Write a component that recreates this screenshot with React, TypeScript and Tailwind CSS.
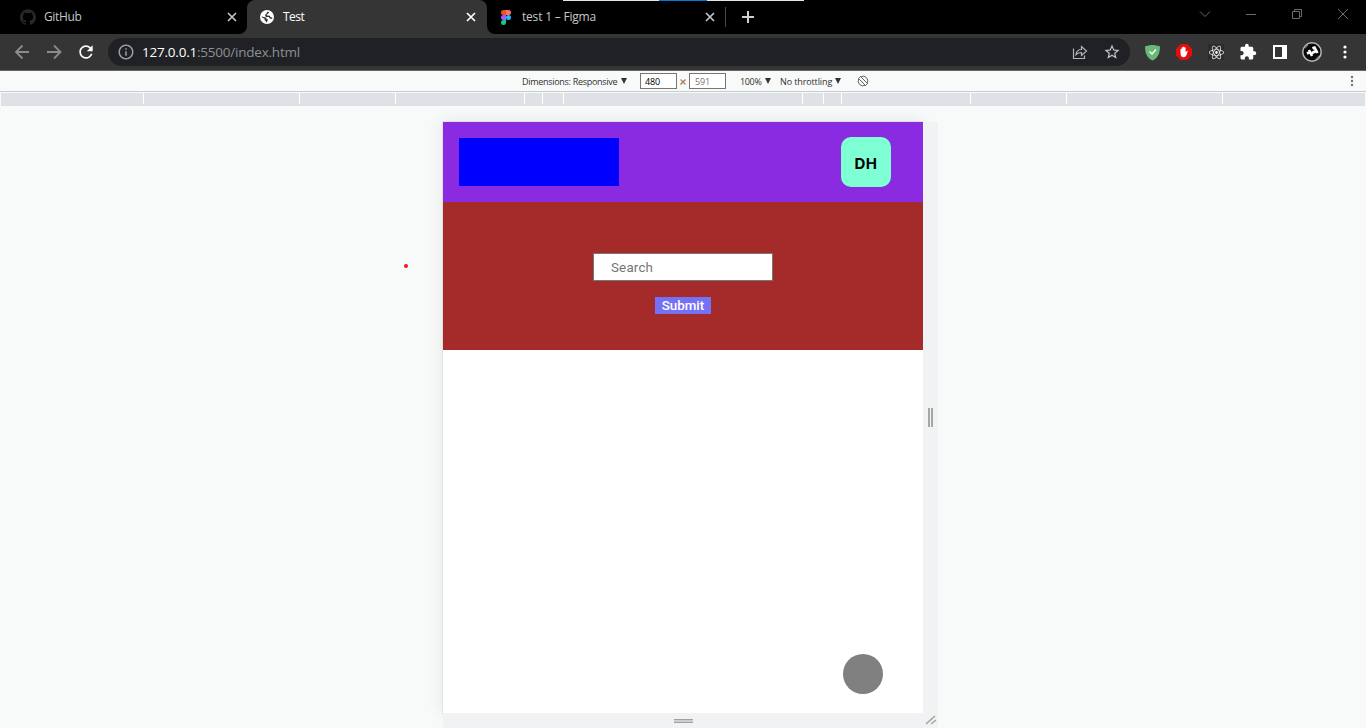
import React from 'react';
import { SiGithub, SiReact } from 'react-icons/si';
import { MdExtension, MdStarBorder, MdRefresh, MdInfoOutline } from 'react-icons/md';

function Close({ className = '' }: { className?: string }) {
  return (
    <svg className={className} width="10" height="10" viewBox="0 0 10 10" stroke="currentColor" strokeWidth="1.7">
      <path d="M1 1l8 8M9 1L1 9" />
    </svg>
  );
}

function FigmaLogo() {
  return (
    <svg width="10" height="15" viewBox="0 0 10 15">
      <path fill="#f24e1e" d="M5 0H2.5a2.5 2.5 0 0 0 0 5H5z" />
      <path fill="#ff7262" d="M5 0h2.5a2.5 2.5 0 0 1 0 5H5z" />
      <path fill="#a259ff" d="M5 5H2.5a2.5 2.5 0 0 0 0 5H5z" />
      <circle cx="7.5" cy="7.5" r="2.5" fill="#1abcfe" />
      <path fill="#0acf83" d="M5 10H2.5A2.5 2.5 0 1 0 5 12.5z" />
    </svg>
  );
}

function Globe() {
  return (
    <svg width="14" height="14" viewBox="0 0 14 14">
      <circle cx="7" cy="7" r="7" fill="#fff" />
      <path
        d="M1.600 6.200Q3.500 7 5.200 7.200 6.800 7.500 6.600 9L8 9.400 6.800 12.500Q5.800 12.500 5.800 11L4.600 10.300V8.800L2 7.500zM7 1.800l2 .2-.6 1.600-1.700.8.5 1.200 2.600.2.8 1.400 1.700.2-.2 1.500-2.300-.3-1-1.500-3-.2-.8-2.200 1.500-1z"
        fill="#353535"
      />
    </svg>
  );
}

function TabBar() {
  return (
    <div className="relative flex h-[34px] bg-black text-[12px] text-[#c4c7ca]">
      <div className="flex h-[34px] w-[247px] items-center pl-5">
        <SiGithub className="size-4 text-[#24292f]" />
        <span className="ml-2 w-[184px] tracking-[-0.35px]">GitHub</span>
        <Close className="-ml-px text-[#c4c7ca]" />
      </div>
      <div className="relative flex h-[34px] w-[240px] items-center rounded-t-lg bg-[#353535] pl-[13px] text-white">
        <svg className="absolute bottom-0 -left-2" width="8" height="8"><path d="M8 0v8H0a8 8 0 0 0 8-8" fill="#353535" /></svg>
        <svg className="absolute -right-2 bottom-0" width="8" height="8"><path d="M0 0v8h8a8 8 0 0 1-8-8" fill="#353535" /></svg>
        <Globe />
        <span className="ml-[9px] w-[183px] tracking-[-0.55px]">Test</span>
        <Close />
      </div>
      <div className="flex h-[34px] w-[238px] items-center pl-[14px]">
        <FigmaLogo />
        <span className="ml-[11px] w-[183px] tracking-[-0.2px]">test 1 – Figma</span>
        <Close />
      </div>
      <div className="mt-[7px] h-5 w-px bg-[#4a4a4a]" />
      <svg className="mt-[11px] ml-4" width="12" height="12" stroke="#d0d0d0" strokeWidth="2"><path d="M6 0v12M0 6h12" /></svg>
      <div className="absolute top-0 left-[563px] flex h-px w-[241px] bg-[#e4e4e4]">
        <div className="ml-24 h-px w-12 bg-[#0078d7]" />
      </div>
      <svg className="ml-auto" width="176" height="34" fill="none" stroke="#6c6c6c">
        <path d="M10 11.5l5 5 5-5M56 14.5h10" />
        <path d="M102.500 11.500h7v7h-7zM104.500 11.500v-2h7v7h-2" />
        <path d="M148 9l10 10M158 9l-10 10" />
      </svg>
    </div>
  );
}

function AddressBar() {
  return (
    <div className="flex h-9 items-center bg-[#353535]">
      <svg width="108" height="36" fill="none" stroke="#8b8b8b" strokeWidth="1.8">
        <path d="M29 18H16M22.500 11.500L16 18l6.500 6.500M47 18h13M54 11.500l6.500 6.500-6.500 6.500" />
      </svg>
      <MdRefresh className="-ml-[32px] size-5 text-white" />
      <div className="ml-3 flex h-7 w-[1022px] shrink-0 items-center rounded-full bg-[#202124] pl-[9px]">
        <MdInfoOutline className="size-[18px] text-[#9a9da1]" />
        <div className="ml-[7px] text-[13.5px] tracking-[-0.22px] text-[#8d9094]">
          <span className="text-white">127.0.0.1</span>:5500/index.html
        </div>
        <svg className="ml-auto" width="16" height="16" fill="none" stroke="#b2b4b7" strokeWidth="1.2">
          <path d="M1.500 4.500v10h11v-3" />
          <path d="M4 10.500C4.500 7 6.500 5.500 9.500 5.500v-3l5 4.500-5 4.500v-3C7 8.500 5.500 9 4 10.500z" />
        </svg>
        <MdStarBorder className="mr-[9px] ml-[15px] size-[18px] text-[#c1c3c6]" />
      </div>
      <svg className="ml-[14px] shrink-0" width="17" height="17" viewBox="0 0 17 17">
        <path d="M1 2.500C4 1.500 6 1 8.500 1s4.500.5 7.500 1.500C16 9 14 14 8.500 16.500 3 14 1 9 1 2.500z" fill="#68b878" />
        <path d="M5.500 7.500L8 10l4-4.500" fill="none" stroke="#fff" strokeWidth="1.4" />
      </svg>
      <svg className="ml-[15px] shrink-0" width="16" height="16" viewBox="0 0 16 16">
        <path d="M4.700 0h6.600L16 4.700v6.600L11.300 16H4.700L0 11.300V4.700z" fill="#e40d0d" />
        <path d="M4.500 9V5.200q.6-.8 1.200 0V8V3.500q.7-.9 1.300 0V7V2.900q.7-.9 1.300 0V7V3.600q.7-.9 1.300 0v5l1.200-1.700q.8-.4 1 .2L10.300 11.500q-.9 1.700-2.500 1.700Q4.500 13.200 4.500 9z" fill="#fff" />
      </svg>
      <div className="ml-4 flex size-4 items-center justify-center bg-[#2c2c2c]"><SiReact className="size-[15px] text-[#f4f4f4]" /></div>
      <MdExtension className="ml-[15px] size-[18px] text-white" />
      <svg className="ml-4 shrink-0" width="14" height="14"><path d="M0 0h14v14H0zM2 2v10h7V2z" fill="#fff" fillRule="evenodd" /></svg>
      <svg className="ml-[15px] shrink-0" width="20" height="20" viewBox="0 0 20 20">
        <circle cx="10" cy="10" r="9.200" fill="#080808" stroke="#b8b8b8" strokeWidth="1.500" />
        <path d="M3 6.500L6 3M13.500 17l4-3.500" stroke="#888" strokeWidth="1" />
        <path d="M5 11.500L9 9.500M7 8l3 6M10 11l4-2M12 4.500l3.500 6.500M12.500 5.500L10.500 6.500" stroke="#fff" strokeWidth="2.600" />
      </svg>
      <svg className="ml-[20.500px] shrink-0" width="4" height="14" fill="#fff"><circle cx="2" cy="2" r="1.600" /><circle cx="2" cy="7" r="1.600" /><circle cx="2" cy="12" r="1.600" /></svg>
    </div>
  );
}

function Arrow({ className = '' }: { className?: string }) {
  return <svg className={className} width="6" height="6"><path d="M0 0h6L3 6z" fill="#333" /></svg>;
}

function DeviceBar() {
  return (
    <div className="flex h-[22px] items-center border-t border-b border-t-[#646464] border-b-[#c8cbcd] bg-[#f8faf9] pl-[522px] text-[9px] whitespace-nowrap text-[#303030]">
      <span className="w-[99px] pt-px tracking-[-0.29px]">Dimensions: Responsive</span>
      <Arrow />
      <div className="ml-[13px] flex h-4 w-[37px] items-center border border-[#767676] bg-white pt-px pl-1 tracking-[-0.2px] text-black">480</div>
      <svg className="mx-[3px] mt-[2px]" width="6" height="6" strokeWidth="1.400"><path d="M.5.5l5 5" stroke="#7d9fb5" /><path d="M5.500.5l-5 5" stroke="#d0701c" /></svg>
      <div className="flex h-4 w-[37px] items-center border border-[#767676] bg-white pt-px pl-[5px] tracking-[-0.2px] text-[#757575]">591</div>
      <span className="ml-[14px] w-[25px] pt-px tracking-[-0.35px]">100%</span>
      <Arrow />
      <span className="ml-[9px] w-[56px] pt-px tracking-[-0.12px]">No throttling</span>
      <Arrow className="-ml-px" />
      <svg className="ml-[16px]" width="12" height="12" viewBox="0 0 12 12" fill="none" stroke="#666">
        <path d="M4 1.700a4.700 4.700 0 0 1 6.300 6.300M8 10.300A4.700 4.700 0 0 1 1.700 4M1.500 3.500l7.500 7.500M3.500 1.500l7.500 7.500M3.700 1.300L1.300 3.700M10.700 8.300L8.300 10.700" />
      </svg>
      <svg className="mr-3 ml-auto" width="4" height="12" fill="#6e7073"><circle cx="2" cy="2" r="1.200" /><circle cx="2" cy="6" r="1.200" /><circle cx="2" cy="10" r="1.200" /></svg>
    </div>
  );
}

const TICKS = [0, 143, 299, 395, 524, 542, 563, 802, 823, 841, 970, 1066, 1222, 1365];

function Ruler() {
  return (
    <div className="mt-px flex h-[13px] bg-[#dee1e6]">
      {TICKS.map((x, i) => (
        <div
          key={x}
          className={i === 0 || i === 13 ? 'h-[13px] border-l border-[#f8faf9]' : 'h-[11px] border-l border-white'}
          style={{ width: (TICKS[i + 1] ?? 1366) - x }}
        />
      ))}
    </div>
  );
}

function Page() {
  return (
    <div className="relative h-[591px] w-[480px] bg-white shadow-[0_0_0_1px_rgba(0,0,0,0.06),0_0_16px_rgba(0,0,0,0.09)]">
      <header className="flex h-20 items-start justify-between bg-[#8a2be2] px-4">
        <div className="mt-4 h-12 w-40 bg-[#0000ff]" />
        <div className="mt-[15px] mr-4 flex size-[50px] items-center justify-center rounded-[10px] bg-[#7fffd4] pt-[3px] font-['Inter'] text-[15px] leading-none font-bold tracking-[0.6px] text-black">DH</div>
      </header>
      <section className="flex h-[148px] flex-col items-center bg-[#a52a2a] pt-[51px] font-['Roboto'] text-[13.33px]">
        <input
          placeholder="Search"
          className="h-7 w-[180px] rounded-[1px] border border-[#767676] bg-white pl-[17px] tracking-[0.2px] placeholder:text-[#757575]"
        />
        <button className="mt-4 h-[17px] w-14 bg-[#7571f5] leading-[17px] font-medium text-white">Submit</button>
      </section>
      <div className="absolute right-10 bottom-[19px] size-10 rounded-full bg-[#808080]" />
    </div>
  );
}

function Viewport() {
  return (
    <main className="relative flex flex-1 overflow-hidden pt-4 pl-[443px]">
      <div className="absolute top-[157.500px] left-[403.500px] size-1 rounded-full bg-[#f01818]" />
      <div className="grid grid-cols-[480px_15px] grid-rows-[591px_15px]">
        <Page />
        <div className="z-10 flex justify-center gap-px bg-[#f1f2f4] pt-[286px]">
          <i className="h-[19px] w-0.5 bg-[#a6a6a6]" />
          <i className="h-[19px] w-0.5 bg-[#a6a6a6]" />
        </div>
        <div className="z-10 flex flex-col items-center bg-[#f1f2f4] pt-[6px] pl-px">
          <i className="h-px w-[19px] bg-[#a0a0a0]" />
          <i className="h-0.5 w-[19px] bg-[#cfcfcf]" />
          <i className="h-px w-[19px] bg-[#a0a0a0]" />
        </div>
        <div className="z-10 bg-[#f1f2f4] pl-[2px]">
          <svg width="12" height="14" stroke="#a0a0a0" strokeWidth="1.500"><path d="M1 11l9-8M6 11l5-4" /></svg>
        </div>
      </div>
    </main>
  );
}

export default function App() {
  return (
    <div className="flex h-[728px] w-[1366px] flex-col overflow-hidden bg-[#f8faf9] font-['Open_Sans','Noto_Sans',sans-serif]">
      <TabBar />
      <AddressBar />
      <DeviceBar />
      <Ruler />
      <Viewport />
    </div>
  );
}
